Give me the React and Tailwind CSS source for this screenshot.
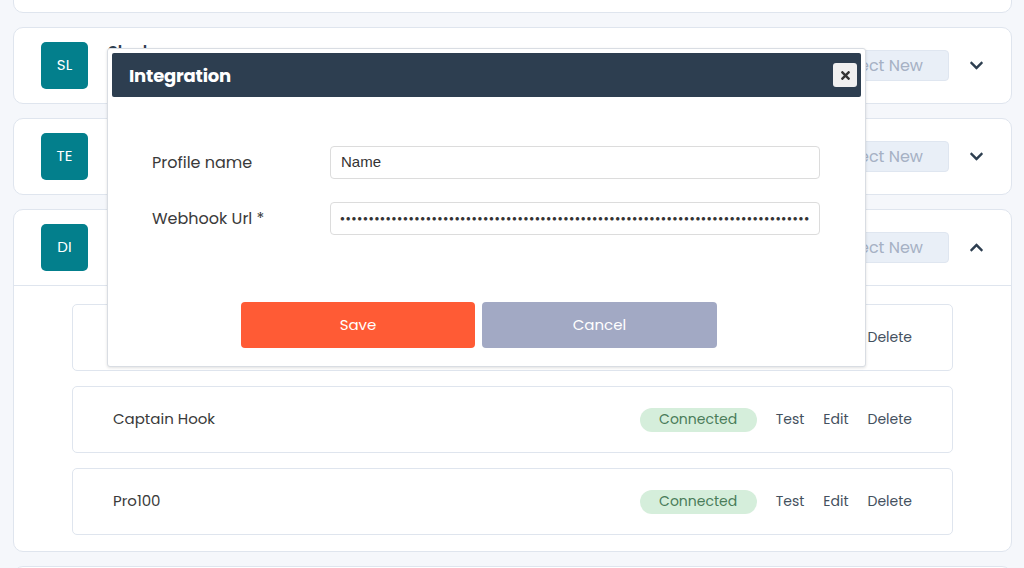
import React from "react";
import { FaChevronDown, FaChevronUp, FaTimes } from "react-icons/fa";

const font = { fontFamily: "Poppins, Inter, 'Open Sans', sans-serif" };

function Header({ initials, name, open }) {
  return (
    <div className="flex items-center h-[75px] pl-[27px] pr-[8px]">
      <div className="w-[47px] h-[47px] rounded-[5px] bg-[#037f8c] text-white flex items-center justify-center text-[15px]">
        {initials}
      </div>
      <div className="ml-[20px] flex flex-col self-start pt-[13px]">
        <div className="text-[16px] font-semibold text-[#2d3e50] leading-[22px]">{name}</div>
      </div>
      <div className="ml-auto flex items-center">
        <div className="h-[31px] px-[25px] rounded-[4px] bg-[#e9eff7] border border-[#dfe6f0] text-[#a6b1c4] text-[16px] flex items-center">
          Connect New
        </div>
        <div className="w-[54px] flex justify-center text-[#2d3e50]">
          {open ? <FaChevronUp size={15} /> : <FaChevronDown size={15} />}
        </div>
      </div>
    </div>
  );
}

function Row({ name }) {
  return (
    <div className="h-[67px] bg-white border border-[#dfe5ee] rounded-[5px] flex items-center pl-[40px] pr-[40px]">
      <div className="text-[15px] text-[#3a3a3a]">{name}</div>
      <div className="ml-auto flex items-center text-[14px]">
        <div className="h-[24px] w-[117px] rounded-full bg-[#d5eedb] text-[#4a7c59] flex items-center justify-center">
          Connected
        </div>
        <span className="ml-[19px] text-[#44505e]">Test</span>
        <span className="ml-[19px] text-[#44505e]">Edit</span>
        <span className="ml-[19px] text-[#44505e]">Delete</span>
      </div>
    </div>
  );
}

export default function App() {
  return (
    <div className="relative w-[1024px] h-[568px] overflow-hidden bg-[#f5f7fb]" style={font}>
      <div className="flex flex-col gap-[14px] pl-[13px] pr-[12px] mt-[-47px]">
        <div className="h-[60px] bg-white border border-[#dfe5ee] rounded-[10px]" />
        <div className="bg-white border border-[#dfe5ee] rounded-[10px]">
          <Header initials="SL" name="Slack" />
        </div>
        <div className="bg-white border border-[#dfe5ee] rounded-[10px]">
          <Header initials="TE" name="Teams" />
        </div>
        <div className="bg-white border border-[#dfe5ee] rounded-[10px]">
          <Header initials="DI" name="Discord" open />
          <div className="border-t border-[#dfe5ee] pt-[18px] pb-[16px] px-[58px] flex flex-col gap-[15px]">
            <Row name="Alerts" />
            <Row name="Captain Hook" />
            <Row name="Pro100" />
          </div>
        </div>
        <div className="h-[60px] bg-white border border-[#dfe5ee] rounded-[10px]" />
      </div>

      <div className="absolute left-[107px] top-[48px] w-[759px] h-[319px] bg-white border border-[#d9dde3] rounded-[3px] shadow-[0_1px_3px_rgba(0,0,0,0.12)] p-[4px] flex flex-col">
        <div className="h-[44px] bg-[#2d3e50] rounded-[2px] flex items-center pl-[17px] pr-[4px]">
          <div className="text-white text-[18px] font-bold tracking-[-0.2px]">Integration</div>
          <div className="ml-auto w-[24px] h-[24px] bg-[#f0f0f0] rounded-[3px] flex items-center justify-center text-[#333]">
            <FaTimes size={13} />
          </div>
        </div>
        <div className="pl-[40px] pr-[41px] pt-[49px] flex flex-col gap-[23px]">
          <div className="flex items-center">
            <div className="w-[178px] text-[16px] text-[#3a3a3a]">Profile name</div>
            <div className="flex-1 h-[33px] border border-[#dcdcdc] rounded-[4px] flex items-center px-[10px] text-[15px] text-[#333]" style={{ fontFamily: "'Liberation Sans', Arial, sans-serif" }}>
              Name
            </div>
          </div>
          <div className="flex items-center">
            <div className="w-[178px] text-[16px] text-[#3a3a3a]">Webhook Url *</div>
            <div className="flex-1 h-[33px] border border-[#dcdcdc] rounded-[4px] flex items-center px-[9px] text-[#333] overflow-hidden whitespace-nowrap" style={{ fontFamily: "'Liberation Sans', Arial, sans-serif" }}>
              <span className="text-[8px] tracking-[0.9px] leading-none">{"●".repeat(82)}</span>
            </div>
          </div>
        </div>
        <div className="mt-auto mb-[14px] flex gap-[7px] pl-[129px]">
          <div className="w-[234px] h-[46px] rounded-[4px] bg-[#ff5b35] text-white text-[15px] flex items-center justify-center">Save</div>
          <div className="w-[235px] h-[46px] rounded-[4px] bg-[#a2a9c4] text-white text-[15px] flex items-center justify-center">Cancel</div>
        </div>
      </div>
    </div>
  );
}
